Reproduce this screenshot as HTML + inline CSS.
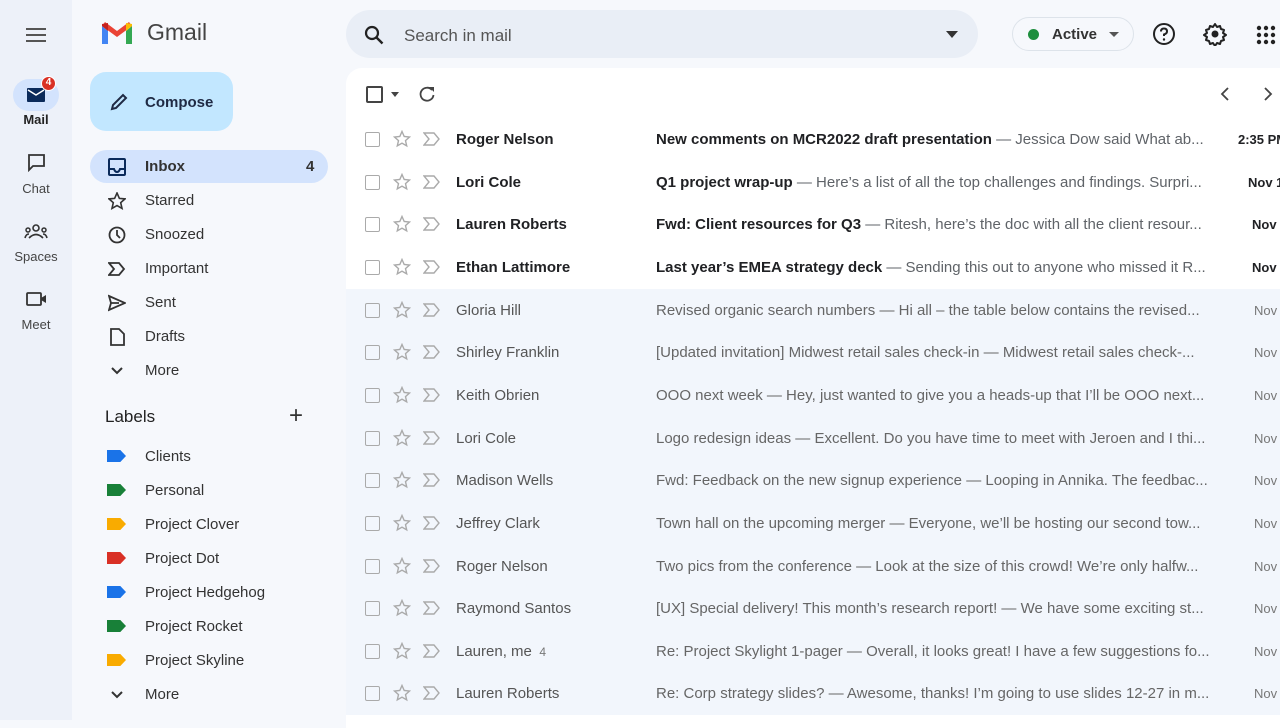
<!DOCTYPE html>
<html><head><meta charset="utf-8"><style>
*{box-sizing:border-box;margin:0;padding:0}
body{width:1280px;height:720px;overflow:hidden;background:#f6f8fc;font-family:"Liberation Sans",sans-serif;color:#202124;position:relative}
.rail{position:absolute;left:0;top:0;width:72px;height:720px;background:#edf1f9}
.ri{position:absolute;left:0;width:72px;text-align:center;font-size:13px;color:#444}
.logo{position:absolute;left:100px;top:20px}
.gm{position:absolute;left:147px;top:19px;font-size:23px;color:#444}
.compose{position:absolute;left:90px;top:72px;width:143px;height:59px;background:#c2e7ff;border-radius:16px;font-size:15px;font-weight:bold;color:#1f2a44}
.nav{position:absolute;left:90px;width:238px;height:33px;border-radius:17px;font-size:15px;color:#333}
.nav span{position:absolute;left:55px;top:8px}
.nav svg{position:absolute;left:18px;top:8px}
.search{position:absolute;left:346px;top:10px;width:632px;height:48px;background:#e9eef6;border-radius:24px}
.panel{position:absolute;left:346px;top:68px;width:940px;height:660px;background:#fff;border-radius:16px 0 0 0}
.row{position:absolute;left:346px;width:934px;height:43px;font-size:15px;white-space:nowrap}
.row.r{background:#f2f6fc;color:#555}
.row .cb{position:absolute;left:19px;top:14px;width:15px;height:15px;border:1.6px solid #aaa;border-radius:2px}
.row .st{position:absolute;left:47px;top:12px}
.row .im{position:absolute;left:77px;top:13px}
.row .s{position:absolute;left:110px;top:13px}
.row .sub{position:absolute;left:310px;top:13px;color:#5f6368}
.row .sub b{color:#202124}
.row.r .sub{color:#666}
.row .d{position:absolute;right:-8px;top:14px;font-size:13px;width:60px;text-align:left}
.u .s,.u .d{font-weight:bold}
.r .d{color:#777}
.lab{position:absolute;left:107px;width:19px;height:12px}
</style></head><body>
<div class="rail">
 <svg style="position:absolute;left:26px;top:28px" width="20" height="14"><path d="M0 1h20M0 7h20M0 13h20" stroke="#555" stroke-width="2"/></svg>
 <div style="position:absolute;left:13px;top:79px;width:46px;height:32px;background:#d3e3fd;border-radius:16px"></div>
 <svg style="position:absolute;left:27px;top:88px" width="18" height="14"><rect width="18" height="14" rx="1" fill="#0b2a5a"/><path d="M1 2l8 5 8-5" stroke="#fff" stroke-width="1.5" fill="none"/></svg>
 <div style="position:absolute;left:41px;top:76px;width:15px;height:15px;border-radius:50%;background:#d93025;border:1.5px solid #fff;color:#fff;font-size:10px;text-align:center;line-height:12px;font-weight:bold">4</div>
 <div class="ri" style="top:112px;font-weight:bold;color:#222">Mail</div>
 <svg style="position:absolute;left:27px;top:153px" width="19" height="19"><path d="M2 2h15v11H6l-4 4z" fill="none" stroke="#333" stroke-width="1.8"/></svg>
 <div class="ri" style="top:181px">Chat</div>
 <svg style="position:absolute;left:24px;top:224px" width="24" height="15"><circle cx="12" cy="4" r="3" fill="none" stroke="#333" stroke-width="1.6"/><circle cx="4" cy="6" r="2" fill="none" stroke="#333" stroke-width="1.5"/><circle cx="20" cy="6" r="2" fill="none" stroke="#333" stroke-width="1.5"/><path d="M5 14q7-7 14 0M1 14q1-4 4-4M23 14q-1-4-4-4" fill="none" stroke="#333" stroke-width="1.6"/></svg>
 <div class="ri" style="top:249px">Spaces</div>
 <svg style="position:absolute;left:26px;top:291px" width="22" height="16"><rect x="1" y="2" width="14" height="12" rx="1" fill="none" stroke="#333" stroke-width="1.8"/><path d="M15 7l5-3v8l-5-3z" fill="#333"/></svg>
 <div class="ri" style="top:317px">Meet</div>
</div>
<svg class="logo" width="34" height="26" viewBox="0 0 34 26"><path d="M2 6v18h6V11z" fill="#4285f4"/><path d="M26 11v13h6V6z" fill="#34a853"/><path d="M2 6l15 11 15-11-3-4-12 9-12-9z" fill="#ea4335"/><path d="M26 3v8l6-5V4z" fill="#fbbc04"/><path d="M2 4v2l6 5V3z" fill="#c5221f"/></svg>
<div class="gm">Gmail</div>
<div class="compose"><svg style="position:absolute;left:19px;top:20px" width="20" height="20"><path d="M3 17l1-4L14 3l3 3L7 16z" fill="none" stroke="#1f2a44" stroke-width="2"/></svg><span style="position:absolute;left:55px;top:22px">Compose</span></div>
<div class="nav" style="top:150px;background:#d3e3fd;font-weight:bold"><svg width="18" height="18"><rect x="1" y="1" width="16" height="16" rx="1" fill="none" stroke="#0b2a5a" stroke-width="2"/><path d="M1 11h5q1 3 3 3t3-3h5" fill="none" stroke="#0b2a5a" stroke-width="2"/></svg><span>Inbox</span><span style="left:216px">4</span></div>
<div class="nav" style="top:184px"><svg width="18" height="18"><path d="M9 1l2.4 5.4 5.6.5-4.3 3.8 1.3 5.7L9 13.5 4 16.4l1.3-5.7L1 6.9l5.6-.5z" fill="none" stroke="#333" stroke-width="1.6"/></svg><span>Starred</span></div>
<div class="nav" style="top:218px"><svg width="18" height="18"><circle cx="9" cy="9" r="7.5" fill="none" stroke="#333" stroke-width="1.8"/><path d="M9 4v5l3 3" fill="none" stroke="#333" stroke-width="1.8"/></svg><span>Snoozed</span></div>
<div class="nav" style="top:252px"><svg width="18" height="18"><path d="M1 3h10l5 6-5 6H1l5-6z" fill="none" stroke="#333" stroke-width="1.8"/></svg><span>Important</span></div>
<div class="nav" style="top:286px"><svg width="18" height="18"><path d="M1 2l16 7-16 7 2-7zM3 9h8" fill="none" stroke="#333" stroke-width="1.8"/></svg><span>Sent</span></div>
<div class="nav" style="top:320px"><svg width="18" height="18"><path d="M3 1h8l5 5v11H3z" fill="none" stroke="#333" stroke-width="1.8"/></svg><span>Drafts</span></div>
<div class="nav" style="top:354px"><svg width="18" height="18"><path d="M4 6l5 5 5-5" fill="none" stroke="#333" stroke-width="2"/></svg><span>More</span></div>
<div style="position:absolute;left:105px;top:407px;font-size:17px;color:#222">Labels</div>
<div style="position:absolute;left:289px;top:402px;font-size:24px;color:#333;font-weight:300">+</div>
<div class="lab" style="top:450px;background:#1a73e8;clip-path:polygon(0 0,70% 0,100% 50%,70% 100%,0 100%)"></div>
<div class="lab" style="top:484px;background:#188038;clip-path:polygon(0 0,70% 0,100% 50%,70% 100%,0 100%)"></div>
<div class="lab" style="top:518px;background:#f9ab00;clip-path:polygon(0 0,70% 0,100% 50%,70% 100%,0 100%)"></div>
<div class="lab" style="top:552px;background:#d93025;clip-path:polygon(0 0,70% 0,100% 50%,70% 100%,0 100%)"></div>
<div class="lab" style="top:586px;background:#1a73e8;clip-path:polygon(0 0,70% 0,100% 50%,70% 100%,0 100%)"></div>
<div class="lab" style="top:620px;background:#188038;clip-path:polygon(0 0,70% 0,100% 50%,70% 100%,0 100%)"></div>
<div class="lab" style="top:654px;background:#f9ab00;clip-path:polygon(0 0,70% 0,100% 50%,70% 100%,0 100%)"></div>
<div class="nav" style="top:440px"><span>Clients</span></div>
<div class="nav" style="top:474px"><span>Personal</span></div>
<div class="nav" style="top:508px"><span>Project Clover</span></div>
<div class="nav" style="top:542px"><span>Project Dot</span></div>
<div class="nav" style="top:576px"><span>Project Hedgehog</span></div>
<div class="nav" style="top:610px"><span>Project Rocket</span></div>
<div class="nav" style="top:644px"><span>Project Skyline</span></div>
<div class="nav" style="top:678px"><svg width="18" height="18"><path d="M4 6l5 5 5-5" fill="none" stroke="#333" stroke-width="2"/></svg><span>More</span></div>

<div class="search"><svg style="position:absolute;left:18px;top:15px" width="20" height="20"><circle cx="8" cy="8" r="6" fill="none" stroke="#222" stroke-width="2.2"/><path d="M12.5 12.5l6 6" stroke="#222" stroke-width="2.4"/></svg><span style="position:absolute;left:58px;top:16px;font-size:17px;color:#555">Search in mail</span><svg style="position:absolute;left:600px;top:21px" width="12" height="7"><path d="M0 0h12L6 7z" fill="#333"/></svg></div>
<div style="position:absolute;left:1012px;top:17px;width:122px;height:34px;border:1px solid #dde3ea;border-radius:17px;font-size:15px;font-weight:bold;color:#333"><span style="position:absolute;left:15px;top:11px;width:11px;height:11px;border-radius:50%;background:#1e8e3e"></span><span style="position:absolute;left:39px;top:8px">Active</span><svg style="position:absolute;left:96px;top:14px" width="10" height="6"><path d="M0 0h10L5 5z" fill="#555"/></svg></div>
<svg style="position:absolute;left:1152px;top:22px" width="24" height="24"><circle cx="12" cy="12" r="10" fill="none" stroke="#222" stroke-width="2"/><path d="M9 9.5q0-3 3-3t3 3q0 2-3 3v1.5" fill="none" stroke="#222" stroke-width="2"/><circle cx="12" cy="17.5" r="1.2" fill="#222"/></svg>
<svg style="position:absolute;left:1203px;top:22px" width="24" height="24" viewBox="0 0 24 24"><path d="M12 2l2 3 3-1 1 3 3 1-1 3 3 2-3 2 1 3-3 1-1 3-3-1-2 3-2-3-3 1-1-3-3-1 1-3-3-2 3-2-1-3 3-1 1-3 3 1z" fill="none" stroke="#222" stroke-width="2" stroke-linejoin="round"/><circle cx="12" cy="12" r="3.5" fill="#222"/></svg>
<svg style="position:absolute;left:1256px;top:25px" width="20" height="20"><g fill="#222"><circle cx="3" cy="3" r="2.2"/><circle cx="10" cy="3" r="2.2"/><circle cx="17" cy="3" r="2.2"/><circle cx="3" cy="10" r="2.2"/><circle cx="10" cy="10" r="2.2"/><circle cx="17" cy="10" r="2.2"/><circle cx="3" cy="17" r="2.2"/><circle cx="10" cy="17" r="2.2"/><circle cx="17" cy="17" r="2.2"/></g></svg>

<div class="panel"></div>
<div style="position:absolute;left:366px;top:86px;width:17px;height:17px;border:2px solid #444;border-radius:2px"></div>
<svg style="position:absolute;left:391px;top:92px" width="8" height="5"><path d="M0 0h8L4 5z" fill="#444"/></svg>
<svg style="position:absolute;left:418px;top:85px" width="18" height="18"><path d="M14 5A6.5 6.5 0 1 0 15.5 10" fill="none" stroke="#444" stroke-width="1.8"/><path d="M11 2h5v5z" fill="#444"/></svg>
<svg style="position:absolute;left:1220px;top:87px" width="10" height="14"><path d="M8 1L2 7l6 6" fill="none" stroke="#444" stroke-width="1.8"/></svg>
<svg style="position:absolute;left:1263px;top:87px" width="10" height="14"><path d="M2 1l6 6-6 6" fill="none" stroke="#444" stroke-width="1.8"/></svg>

<div id="rows"></div>
<script>
const R=[
[1,"Roger Nelson","New comments on MCR2022 draft presentation"," — Jessica Dow said What ab...","2:35 PM",892],
[1,"Lori Cole","Q1 project wrap-up"," — Here’s a list of all the top challenges and findings. Surpri...","Nov 1",902],
[1,"Lauren Roberts","Fwd: Client resources for Q3"," — Ritesh, here’s the doc with all the client resour...","Nov",906],
[1,"Ethan Lattimore","Last year’s EMEA strategy deck"," — Sending this out to anyone who missed it R...","Nov",906],
[0,"Gloria Hill","Revised organic search numbers"," — Hi all – the table below contains the revised...","Nov",908],
[0,"Shirley Franklin","[Updated invitation] Midwest retail sales check-in"," — Midwest retail sales check-...","Nov",908],
[0,"Keith Obrien","OOO next week"," — Hey, just wanted to give you a heads-up that I’ll be OOO next...","Nov",908],
[0,"Lori Cole","Logo redesign ideas"," — Excellent. Do you have time to meet with Jeroen and I thi...","Nov",908],
[0,"Madison Wells","Fwd: Feedback on the new signup experience"," — Looping in Annika. The feedbac...","Nov",908],
[0,"Jeffrey Clark","Town hall on the upcoming merger"," — Everyone, we’ll be hosting our second tow...","Nov",908],
[0,"Roger Nelson","Two pics from the conference"," — Look at the size of this crowd! We’re only halfw...","Nov",908],
[0,"Raymond Santos","[UX] Special delivery! This month’s research report!"," — We have some exciting st...","Nov",908],
[0,"Lauren, me <span style='font-size:12px;color:#777'>&nbsp;4</span>","Re: Project Skylight 1-pager"," — Overall, it looks great! I have a few suggestions fo...","Nov",908],
[0,"Lauren Roberts","Re: Corp strategy slides?"," — Awesome, thanks! I’m going to use slides 12-27 in m...","Nov",908]];
let h="";R.forEach((r,i)=>{const t=Math.round(118+i*42.65);
h+=`<div class="row ${r[0]?'u':'r'}" style="top:${t}px"><div class="cb"></div><svg class="st" width="18" height="18"><path d="M9 1.5l2.2 5 5.3.5-4 3.6 1.2 5.3L9 13.2 4.3 15.9l1.2-5.3-4-3.6 5.3-.5z" fill="none" stroke="#aaa" stroke-width="1.4"/></svg><svg class="im" width="18" height="16"><path d="M1 2h10l5 6-5 6H1l5-6z" fill="none" stroke="#aaa" stroke-width="1.4"/></svg><span class="s">${r[1]}</span><span class="sub">${r[0]?'<b>'+r[2]+'</b>':r[2]}${r[3]}</span><span class="d" style="left:${r[5]}px">${r[4]}</span></div>`});
document.getElementById("rows").innerHTML=h;
</script>
</body></html>
